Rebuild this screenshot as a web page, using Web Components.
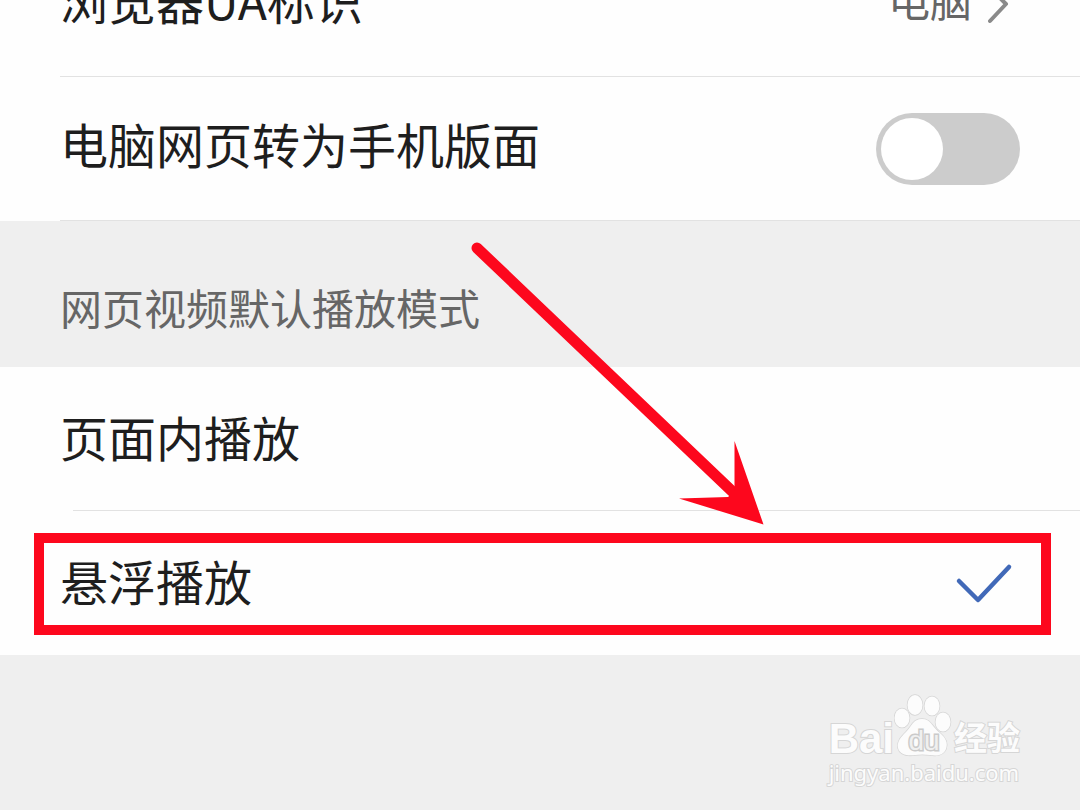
<!DOCTYPE html>
<html lang="zh-CN">
<head>
<meta charset="utf-8">
<meta name="viewport" content="width=device-width, initial-scale=1">
<title>浏览器设置</title>
<style>
  html, body { margin: 0; min-height: 100%; }
  body {
    background: #efefef;
    color: #1e1e1e;
    font-family: "Noto Sans CJK SC", "Noto Sans", sans-serif;
    font-weight: 400;
    overflow: hidden;
  }
</style>
</head>
<body>
<settings-page>
  <link-row value="电脑">浏览器UA标识</link-row>
  <switch-row>电脑网页转为手机版面</switch-row>
  <group-title>网页视频默认播放模式</group-title>
  <option-row divider>页面内播放</option-row>
  <option-row checked marked>悬浮播放</option-row>
  <guide-arrow slot="overlay"></guide-arrow>
  <site-mark slot="footer"></site-mark>
</settings-page>

<script>
const ROW = `
  :host { display: block; background: #fefefe; position: relative; }
  .row {
    display: flex; align-items: center; justify-content: space-between;
    box-sizing: border-box; width: 100%; height: 144px; padding: 0 60px;
    margin: 0; border: 0; background: none;
    color: inherit; font: inherit; font-size: 48px; line-height: 72px;
    text-align: left; cursor: pointer;
  }
  .label { padding-bottom: 12px; white-space: nowrap; }
  .line { height: 1px; margin: -1px 0 0 60px; background: #e2e2e2; }
`;

function define(name, html, setup) {
  customElements.define(name, class extends HTMLElement {
    constructor() {
      super();
      const t = document.createElement('template');
      t.innerHTML = html;
      this.attachShadow({ mode: 'open' }).append(t.content.cloneNode(true));
    }
    connectedCallback() { if (setup) setup(this, this.shadowRoot); }
  });
}

define('settings-page', `
  <style>
    :host { display: flex; flex-direction: column; min-height: 100vh; position: relative; overflow: hidden; }
    /* The list is scrolled so that its first row is partly out of view. */
    main { margin-top: -67px; }
    footer { flex: 1; display: flex; justify-content: flex-end; align-items: flex-start; padding: 39px 60px 0; }
  </style>
  <main><slot></slot></main>
  <footer><slot name="footer"></slot></footer>
  <slot name="overlay"></slot>
`);

define('link-row', `
  <style>${ROW}
    .end { display: flex; align-items: center; gap: 16px; color: #666; font-size: 42px; }
    .value { padding-bottom: 12px; }
    svg { display: block; margin-right: 8px; }
  </style>
  <button class="row" type="button">
    <span class="label"><slot></slot></span>
    <span class="end"><span class="value"></span>
      <svg width="24" height="40" viewBox="0 0 24 40" fill="none" stroke="#8a8a8a" stroke-width="4" stroke-linecap="round" stroke-linejoin="round" aria-hidden="true"><path d="M2 3 18 19 2 36"/></svg>
    </span>
  </button>
  <div class="line"></div>
`, (el, root) => { root.querySelector('.value').textContent = el.getAttribute('value'); });

define('switch-row', `
  <style>${ROW}
    input {
      appearance: none; flex: none; box-sizing: border-box; margin: 0; padding: 5px;
      width: 144px; height: 72px; border-radius: 36px; background: #ccc; cursor: pointer;
    }
    input::before { content: ""; display: block; width: 62px; height: 62px; border-radius: 50%; background: #fff; }
    input:checked { background: #4169b8; }
    input:checked::before { margin-left: auto; }
  </style>
  <label class="row"><span class="label"><slot></slot></span><input type="checkbox" role="switch"></label>
  <div class="line"></div>
`);

define('group-title', `
  <style>
    :host { display: block; }
    h2 { margin: 0; padding: 54px 60px 28px; color: #666; font-size: 42px; line-height: 64px; font-weight: inherit; }
  </style>
  <h2><slot></slot></h2>
`);

define('option-row', `
  <style>${ROW}
    .label { padding-bottom: 6px; }
    .line { display: none; margin-left: 73px; }
    :host([divider]) .line { display: block; }
    .mark { display: grid; margin-right: 6px; }
    .mark > * { grid-area: 1 / 1; }
    input { appearance: none; margin: 0; width: 60px; height: 48px; cursor: pointer; }
    svg { visibility: hidden; pointer-events: none; }
    input:checked + svg { visibility: visible; }
    .frame { display: none; position: absolute; inset: 22px 29px 20px 34px; border: 10px solid #fd071d; pointer-events: none; }
    :host([marked]) .frame { display: block; }
  </style>
  <label class="row">
    <span class="label"><slot></slot></span>
    <span class="mark">
      <input type="radio" name="mode">
      <svg width="60" height="48" viewBox="0 0 60 48" fill="none" stroke="#4169b8" stroke-width="4.500" stroke-linecap="round" stroke-linejoin="round" aria-hidden="true"><path d="M5 22 24 41 55 8"/></svg>
    </span>
  </label>
  <div class="line"></div>
  <div class="frame"></div>
`, (el, root) => { root.querySelector('input').checked = el.hasAttribute('checked'); });

define('guide-arrow', `
  <style>
    :host { display: block; position: absolute; left: 470px; top: 240px; pointer-events: none; }
    svg { display: block; }
  </style>
  <svg width="300" height="290" viewBox="470 240 300 290" fill="#fd071d" aria-hidden="true">
    <path d="M477 248 736 495" stroke="#fd071d" stroke-width="11" stroke-linecap="round"/>
    <path d="M763.500 524.500 734.500 441 734.500 491 728 497 679 498.500Z"/>
  </svg>
`);

define('site-mark', `
  <style>
    :host { display: block; color: #fcfcfc; }
    .brand { display: flex; align-items: flex-end; height: 64px; }
    .brand, .url { -webkit-text-stroke: 2px #d6d6d6; paint-order: stroke fill; }
    .latin { font: bold 42px/38px "Liberation Sans", sans-serif; }
    .cjk { font-size: 33px; line-height: 44px; font-weight: 700; }
    .paw { display: grid; place-items: end center; width: 60px; height: 64px; }
    .paw > * { grid-area: 1 / 1; }
    .du { font: 28px/34px "Liberation Sans", sans-serif; color: #f0f0f0; -webkit-text-stroke: 3px #cacaca; }
    .url { display: block; color: inherit; text-decoration: none; font: 400 22px/28px "Noto Sans", sans-serif; }
  </style>
  <div class="brand">
    <span class="latin">Bai</span>
    <span class="paw">
      <svg width="60" height="64" viewBox="0 0 60 64" fill="#fcfcfc" stroke="#d6d6d6" stroke-width="1.500" aria-hidden="true">
        <ellipse cx="8" cy="24" rx="7.500" ry="9.500"/>
        <ellipse cx="21" cy="11" rx="7.500" ry="10"/>
        <ellipse cx="38" cy="12" rx="7.500" ry="9.500"/>
        <ellipse cx="49" cy="28" rx="7.500" ry="9.500"/>
        <path d="M28 25C37 25 38 33 46 39C52 44 54 49 52 55C49 62 42 62 36 61Q28 60 21 61C14 62 6 61 4 54C3 47 7 43 12 38C18 32 19 25 28 25Z"/>
      </svg>
      <span class="du">du</span>
    </span>
    <span class="cjk">经验</span>
  </div>
  <a class="url" href="#">jingyan.baidu.com</a>
`);
</script>
</body>
</html>
